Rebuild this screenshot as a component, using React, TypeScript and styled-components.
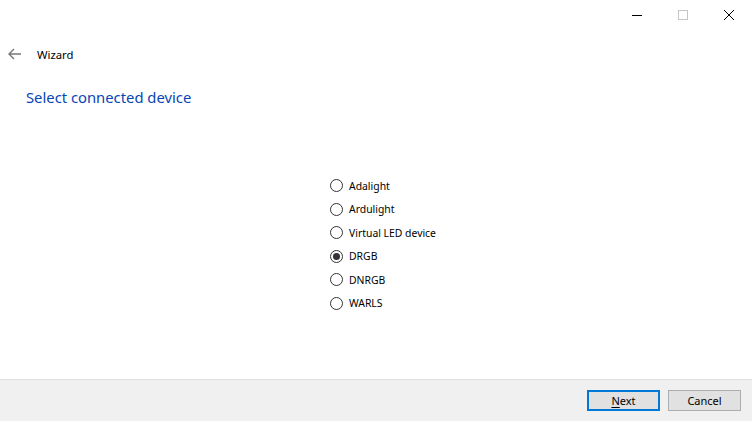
import React, { useState } from "react";
import styled, { createGlobalStyle } from "styled-components";

const GlobalStyle = createGlobalStyle`
  html, body {
    margin: 0;
    padding: 0;
    background: #ffffff;
  }
  body {
    font-family: "Noto Sans", "Segoe UI", sans-serif;
    font-size: 11px;
    color: #000;
  }
`;

const Window = styled.div`
  width: 752px;
  height: 421px;
  display: flex;
  flex-direction: column;
  background: #fff;
  overflow: hidden;
`;

const TitleBar = styled.div`
  height: 30px;
  display: flex;
  justify-content: flex-end;
`;

const CaptionButton = styled.div`
  width: 46px;
  height: 30px;
  display: flex;
  align-items: center;
  justify-content: center;
`;

const NavRow = styled.div`
  margin-top: 10px;
  height: 28px;
  display: flex;
  align-items: center;
  padding-left: 8px;
  gap: 15px;
`;

const NavTitle = styled.span`
  font-size: 11.3px;
`;

const Heading = styled.h1`
  margin: 18px 0 0 26px;
  font-size: 14.8px;
  line-height: 22px;
  font-weight: 400;
  color: #0845b5;
`;

const Content = styled.div`
  flex: 1;
  display: flex;
  align-items: center;
  justify-content: center;
  padding-left: 14px;
  padding-top: 2px;
`;

const RadioList = styled.div`
  display: flex;
  flex-direction: column;
`;

const RadioRow = styled.label`
  height: 23.6px;
  display: flex;
  align-items: center;
  gap: 6px;
  font-size: 10.4px;
  cursor: default;
`;

const Circle = styled.span<{ $checked: boolean }>`
  width: 11px;
  height: 11px;
  border: 1px solid #333;
  border-radius: 50%;
  display: flex;
  align-items: center;
  justify-content: center;
  background: #fff;

  &::after {
    content: "";
    width: 7px;
    height: 7px;
    border-radius: 50%;
    background: #333;
    display: ${(p) => (p.$checked ? "block" : "none")};
  }
`;

const Footer = styled.div`
  box-sizing: border-box;
  height: 42px;
  flex-shrink: 0;
  border-top: 1px solid #dfdfdf;
  background: #f0f0f0;
  display: flex;
  justify-content: flex-end;
  align-items: flex-start;
  padding: 10px 11px 0 0;
  gap: 8px;
`;

const Button = styled.button<{ $primary?: boolean }>`
  width: 73px;
  height: 21px;
  box-sizing: border-box;
  background: #e1e1e1;
  border: ${(p) => (p.$primary ? "2px solid #0078d7" : "1px solid #adadad")};
  font-family: "Noto Sans", "Segoe UI", sans-serif;
  font-size: 11px;
  color: #000;
  padding: 0;

  u {
    text-underline-offset: 2px;
  }
`;

const devices = ["Adalight", "Ardulight", "Virtual LED device", "DRGB", "DNRGB", "WARLS"];

export default function App() {
  const [selected, setSelected] = useState("DRGB");

  return (
    <>
      <GlobalStyle />
      <Window>
        <TitleBar>
          <CaptionButton>
            <svg width="12" height="12" viewBox="0 0 12 12">
              <path d="M1 6.5h10" stroke="#000" strokeWidth="1" />
            </svg>
          </CaptionButton>
          <CaptionButton>
            <svg width="12" height="12" viewBox="0 0 12 12">
              <rect x="1.5" y="1.5" width="9" height="9" fill="none" stroke="#c6c6c6" strokeWidth="1" />
            </svg>
          </CaptionButton>
          <CaptionButton>
            <svg width="12" height="12" viewBox="0 0 12 12">
              <path d="M1 1l10 10M11 1L1 11" stroke="#000" strokeWidth="1" />
            </svg>
          </CaptionButton>
        </TitleBar>

        <NavRow>
          <svg width="14" height="12" viewBox="0 0 14 12">
            <path d="M1 6h12M6 1L1 6l5 5" stroke="#777" strokeWidth="1.4" fill="none" />
          </svg>
          <NavTitle>Wizard</NavTitle>
        </NavRow>

        <Heading>Select connected device</Heading>

        <Content>
          <RadioList>
            {devices.map((d) => (
              <RadioRow key={d} onClick={() => setSelected(d)}>
                <Circle $checked={selected === d} />
                {d}
              </RadioRow>
            ))}
          </RadioList>
        </Content>

        <Footer>
          <Button $primary>
            <u>N</u>ext
          </Button>
          <Button>Cancel</Button>
        </Footer>
      </Window>
    </>
  );
}
